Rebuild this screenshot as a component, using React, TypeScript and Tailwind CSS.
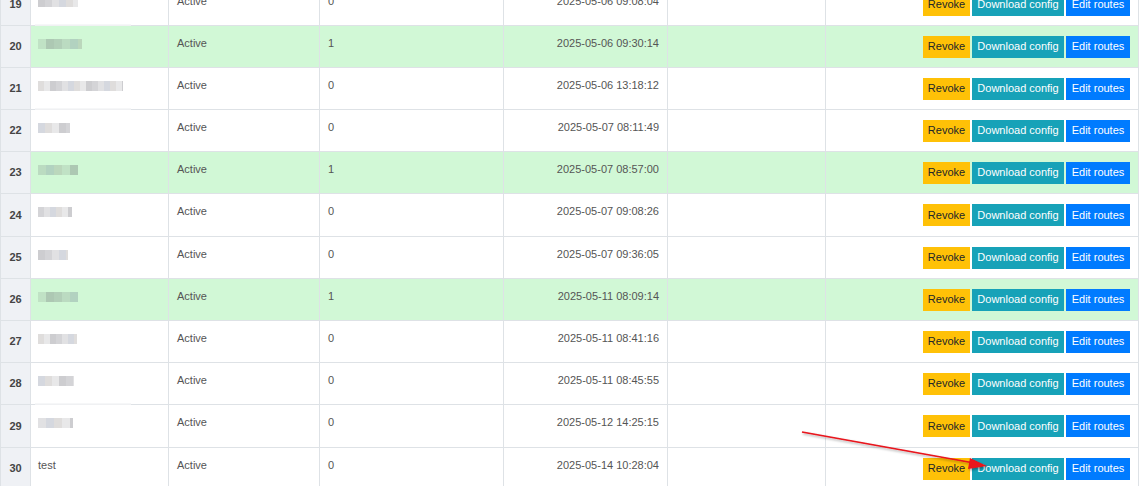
type Row = {
  id: number;
  name: string;
  blurWidth: number;
  count: number;
  date: string;
  height: number;
  strip?: boolean;
};

const rows: Row[] = [
  { id: 19, name: "", blurWidth: 40, count: 0, date: "2025-05-06 09:08:04", height: 42, strip: true },
  { id: 20, name: "", blurWidth: 44, count: 1, date: "2025-05-06 09:30:14", height: 42 },
  { id: 21, name: "", blurWidth: 85, count: 0, date: "2025-05-06 13:18:12", height: 42, strip: true },
  { id: 22, name: "", blurWidth: 32, count: 0, date: "2025-05-07 08:11:49", height: 42 },
  { id: 23, name: "", blurWidth: 40, count: 1, date: "2025-05-07 08:57:00", height: 42 },
  { id: 24, name: "", blurWidth: 34, count: 0, date: "2025-05-07 09:08:26", height: 43 },
  { id: 25, name: "", blurWidth: 30, count: 0, date: "2025-05-07 09:36:05", height: 42 },
  { id: 26, name: "", blurWidth: 40, count: 1, date: "2025-05-11 08:09:14", height: 42 },
  { id: 27, name: "", blurWidth: 39, count: 0, date: "2025-05-11 08:41:16", height: 42 },
  { id: 28, name: "", blurWidth: 36, count: 0, date: "2025-05-11 08:45:55", height: 42, strip: true },
  { id: 29, name: "", blurWidth: 35, count: 0, date: "2025-05-12 14:25:15", height: 43 },
  { id: 30, name: "test", blurWidth: 0, count: 0, date: "2025-05-14 10:28:04", height: 42 },
];

const shades = [
  "rgba(90,90,100,0.26)",
  "rgba(90,90,100,0.18)",
  "rgba(80,90,120,0.24)",
  "rgba(110,100,95,0.22)",
  "rgba(90,90,100,0.14)",
  "rgba(90,90,100,0.30)",
];

// pixelated stand-in for the blurred names
function Mosaic({ width, seed }: { width: number; seed: number }) {
  const blocks = [];
  let x = 0;
  let i = 0;
  while (x < width) {
    const w = Math.min(6 + ((seed * 7 + i * 3) % 3), width - x);
    blocks.push(
      <div
        key={i}
        className="h-[10px]"
        style={{ width: w, background: shades[(seed * 5 + i * 7) % shades.length] }}
      />
    );
    x += w;
    i++;
  }
  return <div className="flex mt-[4px] blur-[0.7px]">{blocks}</div>;
}

function Buttons() {
  return (
    <div className="flex justify-end gap-[2px] pr-[8px]">
      <button className="h-[22px] w-[47px] bg-[#ffc107] text-[#212529] text-[11px]">Revoke</button>
      <button className="h-[22px] w-[92px] bg-[#17a2b8] text-white text-[11px]">Download config</button>
      <button className="h-[22px] w-[64px] bg-[#007bff] text-white text-[11px]">Edit routes</button>
    </div>
  );
}

function TableRow({ row }: { row: Row }) {
  const green = row.count === 1;
  const bg = green ? "bg-[#d1f8d6]" : "bg-white";
  return (
    <div
      className="grid grid-cols-[30px_138px_151px_184px_164px_158px_313px] border-t border-[#dee2e6]"
      style={{ height: row.height }}
    >
      <div className="flex items-center justify-center bg-[#eff1f5] border-r border-[#dee2e6] font-bold text-[11px] text-[#444]">
        {row.id}
      </div>
      <div className={`${bg} border-r border-[#dee2e6] pl-[7px] pt-[9px] text-[11px] leading-4 text-[#555] relative`}>
        {row.name ? row.name : <Mosaic width={row.blurWidth} seed={row.id} />}
        {row.strip && (
          <div className="absolute left-[4px] bottom-[-3px] w-[96px] h-[4px] bg-[#f4f5f6] opacity-80" />
        )}
      </div>
      <div className={`${bg} border-r border-[#dee2e6] pl-[8px] pt-[9px] text-[11px] leading-4 text-[#555]`}>
        Active
      </div>
      <div className={`${bg} border-r border-[#dee2e6] pl-[8px] pt-[9px] text-[11px] leading-4 text-[#555]`}>
        {row.count}
      </div>
      <div className={`${bg} border-r border-[#dee2e6] pr-[8px] pt-[9px] text-right text-[11px] leading-4 text-[#555]`}>
        {row.date}
      </div>
      <div className={`${bg} border-r border-[#dee2e6]`} />
      <div className={`${bg} border-r border-[#dee2e6] flex items-center`}>
        <div className="w-full">
          <Buttons />
        </div>
      </div>
    </div>
  );
}

export default function App() {
  return (
    <div className="relative w-[1139px] h-[486px] overflow-hidden bg-white font-['Liberation_Sans',Arial,sans-serif]">
      <div className="mt-[-17px] border-l border-[#dee2e6]">
        {rows.map((row) => (
          <TableRow key={row.id} row={row} />
        ))}
      </div>

      {/* red annotation arrow */}
      <svg className="absolute left-0 top-0 pointer-events-none" width="1139" height="486">
        <defs>
          <filter id="sh" x="-10%" y="-50%" width="120%" height="200%">
            <feDropShadow dx="1" dy="1.5" stdDeviation="1" floodColor="#000" floodOpacity="0.35" />
          </filter>
        </defs>
        <g filter="url(#sh)">
          <line x1="802" y1="432" x2="974" y2="463" stroke="#e8131b" strokeWidth="1.6" />
          <polygon points="987,466 970,458 968,469" fill="#e8131b" />
        </g>
      </svg>
    </div>
  );
}
